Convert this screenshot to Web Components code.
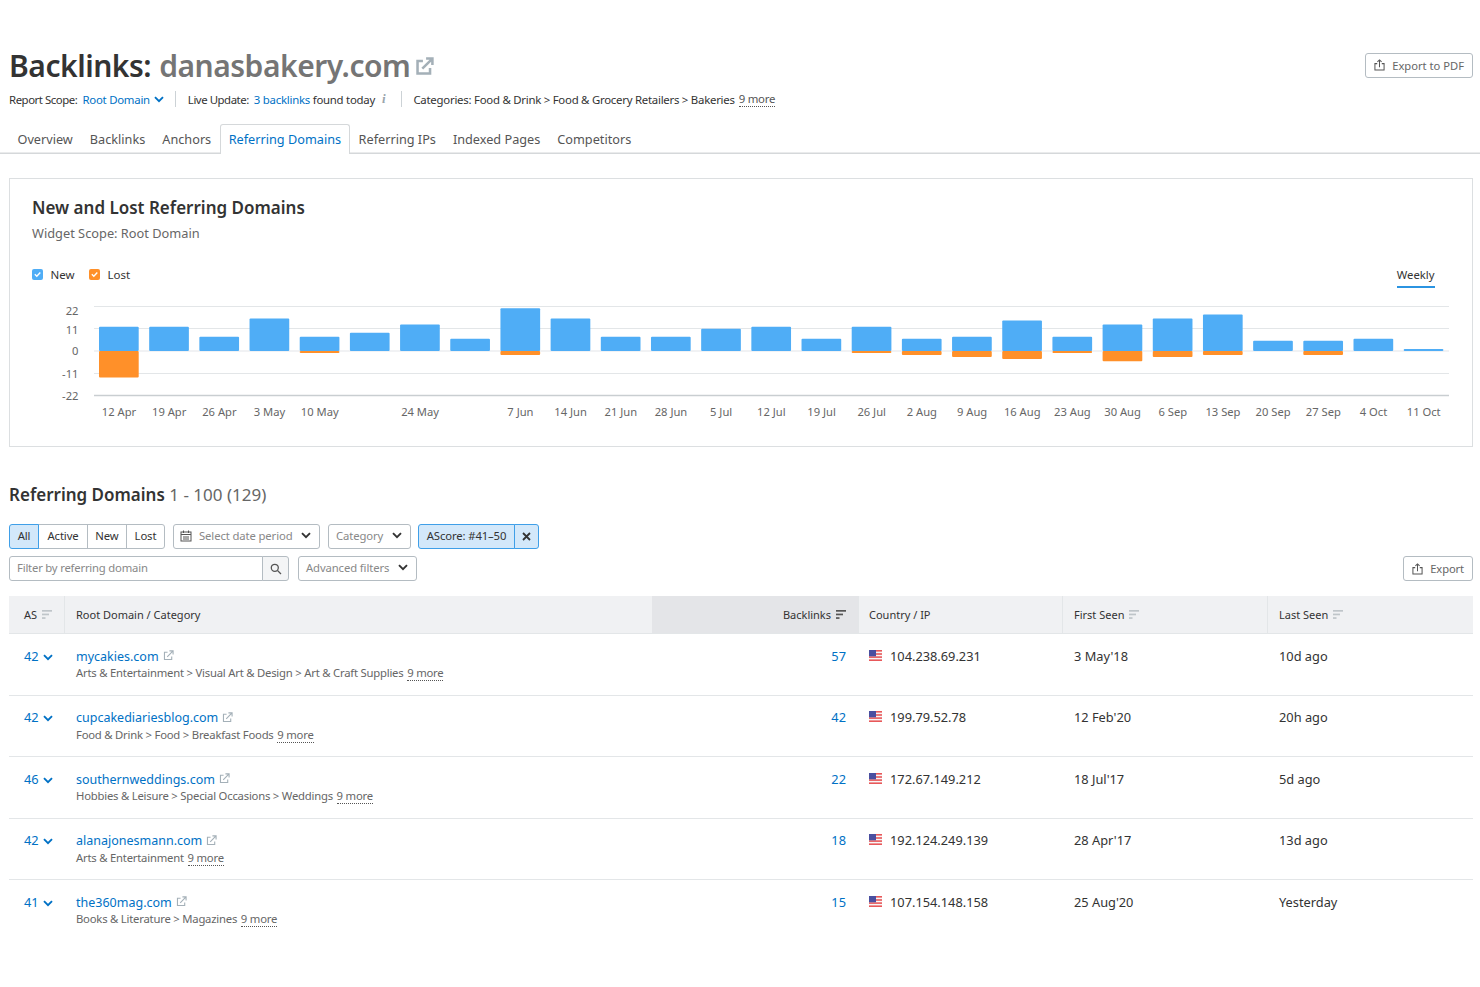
<!DOCTYPE html>
<html>
<head>
<meta charset="utf-8">
<title>Backlinks</title>
<style>
    html, body { margin: 0; background: #fff; }
    body { font-family: "Noto Sans", "Open Sans", sans-serif; color: #333; }
    report-page { width: 1480px; }
</style>
</head>
<body>
<report-page></report-page>

<script>
const ICONS = {
    ext: `<svg viewBox="0 0 12 12" width="100%" height="100%" fill="none" stroke="currentColor" stroke-width="1.2" style="display:block"><path d="M9.5 7v3.4H1.6V2.5H5"/><path d="M4.6 7.4 10.4 1.6M7 1h4v4" /></svg>`,
    chevron: `<svg viewBox="0 0 10 7" width="10" height="7" fill="none" stroke="currentColor" stroke-width="1.9"><path d="M1 1.2 5 5.2 9 1.2"/></svg>`,
    upload: `<svg viewBox="0 0 12 13" width="11" height="12" fill="none" stroke="currentColor" stroke-width="1.1"><path d="M3.5 5H1v7h10V5H8.500"/><path d="M6 9V1M3.700 3.200 6 1l2.300 2.200"/></svg>`,
    sort: `<svg viewBox="0 0 10 10" width="10" height="10" fill="currentColor"><rect width="10" height="1.700"/><rect y="3.600" width="7" height="1.700"/><rect y="7.200" width="3.500" height="1.700"/></svg>`,
    flag: `<svg viewBox="0 0 13 11" width="13" height="11"><rect width="13" height="11" fill="#f7f7f7"/><rect y="0" width="13" height="1.600" fill="#e8585a"/><rect y="3.200" width="13" height="1.600" fill="#e8585a"/><rect y="6.300" width="13" height="1.600" fill="#e8585a"/><rect y="9.400" width="13" height="1.600" fill="#e8585a"/><rect width="7" height="6.300" fill="#4a4fa0"/></svg>`
};

class SmallButton extends HTMLElement {
    connectedCallback() {
        this.attachShadow({ mode: 'open' });
        this.shadowRoot.innerHTML = `
            <style>
                :host { display: inline-flex; align-items: center; gap: 7px; height: 25px; box-sizing: border-box;
                    border: 1px solid #b4bcc2; border-radius: 3px; padding: 0 8px 0 8px; font-size: 11.200px; color: #666; background: #fff; white-space: nowrap; }
                svg { color: #555; display: block; }
            </style>
            ${ICONS.upload}<slot></slot>`;
    }
}

class ReportHeader extends HTMLElement {
    connectedCallback() {
        this.attachShadow({ mode: 'open' });
        this.shadowRoot.innerHTML = `
            <style>
                :host { display: block; padding: 45px 7px 0 9px; }
                .top { display: flex; justify-content: space-between; align-items: center; height: 40px; }
                h1 { margin: 0; padding-top: 2px; font-size: 30px; line-height: 38px; font-weight: 600; color: #333; display: flex; align-items: center; letter-spacing: -.47px; }
                h1 span { color: #757575; margin-left: 8px; }
                h1 i { display: block; width: 19px; height: 19px; margin-left: 5px; color: #a4b0b8; stroke-width: 1.6; }
                h1 i svg { stroke-width: 1.600; }
                .scope { display: flex; align-items: center; height: 20px; margin-top: 4px; font-size: 11.400px; letter-spacing: -.25px; color: #333; white-space: nowrap; }
                a { color: #0071c5; }
                .sep { width: 1px; height: 16px; background: #ccd2d6; margin: 0 11.500px; }
                .chev { color: #0071c5; margin-left: 4px; display: inline-flex; }
                .info { color: #9aa5ac; font: italic 700 13px "Liberation Serif", serif; margin-left: 7px; margin-right: 4px; }
                .more { border-bottom: 1px dotted #555; margin-left: 4px; line-height: 14px; color: #555; }
                .pre { margin-right: 5px; letter-spacing: -.45px; }
            </style>
            <div class="top">
                <h1>Backlinks: <span>danasbakery.com</span><i>${ICONS.ext}</i></h1>
                <small-button>Export to PDF</small-button>
            </div>
            <div class="scope">
                <span class="pre">Report Scope:</span><a>Root Domain</a><span class="chev">${ICONS.chevron}</span>
                <span class="sep"></span>
                <span class="pre">Live Update:</span><a>3 backlinks</a>&nbsp;found today<span class="info">i</span>
                <span class="sep"></span>
                <span>Categories: Food &amp; Drink &gt; Food &amp; Grocery Retailers &gt; Bakeries</span><span class="more">9 more</span>
            </div>`;
    }
}

class ReportTabs extends HTMLElement {
    connectedCallback() {
        const tabs = ['Overview', 'Backlinks', 'Anchors', 'Referring Domains', 'Referring IPs', 'Indexed Pages', 'Competitors'];
        this.attachShadow({ mode: 'open' });
        this.shadowRoot.innerHTML = `
            <style>
                :host { display: flex; height: 30px; margin-top: 15px; padding-left: 9px; box-shadow: inset 0 -1.500px 0 #d5d8da; font-size: 12.700px; color: #555; }
                div { display: flex; align-items: center; padding: 0 8.500px; white-space: nowrap; }
                div.active { color: #0071c5; border: 1px solid #d5d8da; border-bottom: 0; border-radius: 3px 3px 0 0; background: #fff; padding: 0 8px 1px; }
            </style>
            ${tabs.map(t => `<div class="${t === 'Referring Domains' ? 'active' : ''}">${t}</div>`).join('')}`;
    }
}

class BarChart extends HTMLElement {
    connectedCallback() {
        // label, new, lost
        const weeks = [
            ['12 Apr', 12, 13], ['19 Apr', 12, 0], ['26 Apr', 7, 0], ['3 May', 16, 0], ['10 May', 7, 1], ['', 9, 0],
            ['24 May', 13, 0], ['', 6, 0], ['7 Jun', 21, 2], ['14 Jun', 16, 0], ['21 Jun', 7, 0], ['28 Jun', 7, 0],
            ['5 Jul', 11, 0], ['12 Jul', 12, 0], ['19 Jul', 6, 0], ['26 Jul', 12, 1], ['2 Aug', 6, 2], ['9 Aug', 7, 3],
            ['16 Aug', 15, 4], ['23 Aug', 7, 1], ['30 Aug', 13, 5], ['6 Sep', 16, 3], ['13 Sep', 18, 2], ['20 Sep', 5, 0],
            ['27 Sep', 5, 2], ['4 Oct', 6, 0], ['11 Oct', 1, 0]
        ];
        const zero = 51, unit = 2.03, step = 50.18;
        // value, line y, label baseline
        const grid = [[22, 6.500, 15], [11, 28.500, 33.500], [0, 51, 55], [-11, 73.500, 77.500], [-22, 95.500, 99.500]];
        const bars = weeks.map(([label, plus, minus], i) => {
            const x = 99 + i * step;
            const top = plus * unit, bottom = minus * unit;
            return `
                <rect x="${x}" y="${zero - top}" width="39.700" height="${top}" fill="#4fadf6" rx="1"/>
                ${minus ? `<rect x="${x}" y="${zero}" width="39.700" height="${bottom}" fill="#ff9029" rx="1"/>` : ''}
                ${label ? `<text x="${x + 20}" y="116" text-anchor="middle">${label}</text>` : ''}`;
        }).join('');
        this.attachShadow({ mode: 'open' });
        this.shadowRoot.innerHTML = `
            <style>
                :host { display: block; margin: 0 -23px 0 -23px; height: 122px; }
                svg { display: block; }
                text { font-size: 11.200px; fill: #666; font-family: "Noto Sans", "Open Sans", sans-serif; }
            </style>
            <svg width="1460" height="122" viewBox="0 0 1460 122">
                ${grid.map(([v, y, base]) => `
                    <line x1="85" x2="1440" y1="${y}" y2="${y}" stroke="${v === -22 ? '#c9ced1' : v === 0 ? '#eceef0' : '#e3e6e8'}" stroke-width="${v === -22 ? 1.500 : v === 0 ? 1.500 : 1}"/>
                    <text x="69.500" y="${base}" text-anchor="end">${v}</text>`).join('')}
                <g transform="translate(-9 0)">${bars}</g>
            </svg>`;
    }
}

class ChartWidget extends HTMLElement {
    connectedCallback() {
        const check = c => `<svg width="11" height="11" viewBox="0 0 11 11"><rect width="11" height="11" rx="2" fill="${c}"/><path d="M2.800 5.300 4.800 7.200 8.300 3.600" fill="none" stroke="#fff" stroke-width="1.400"/></svg>`;
        this.attachShadow({ mode: 'open' });
        this.shadowRoot.innerHTML = `
            <style>
                :host { display: block; box-sizing: border-box; height: 269px; margin: 24px 7px 0 9px; border: 1.500px solid #dcdfe1; padding: 0 22px; }
                h2 { margin: 17px 0 0; font-size: 17px; line-height: 24px; font-weight: 600; color: #333; }
                p { margin: 3px 0 0; font-size: 12.800px; line-height: 20px; color: #666; }
                .legend { display: flex; align-items: center; height: 20px; margin-top: 21px; font-size: 11.500px; color: #333; }
                .legend svg { margin-right: 7.500px; }
                .legend span { margin-right: 14.500px; }
                .weekly { margin-left: auto; height: 24px; box-sizing: border-box; padding-top: 3px; margin-bottom: -4px; margin-right: 15.500px; font-size: 11.300px; border-bottom: 2.500px solid #2b94e1; }
                bar-chart { margin-top: 16px; }
            </style>
            <h2>New and Lost Referring Domains</h2>
            <p>Widget Scope: Root Domain</p>
            <div class="legend">
                ${check('#4fadf6')}<span>New</span>${check('#ff9029')}<span>Lost</span>
                <div class="weekly">Weekly</div>
            </div>
            <bar-chart></bar-chart>`;
    }
}

class FilterBar extends HTMLElement {
    connectedCallback() {
        this.attachShadow({ mode: 'open' });
        this.shadowRoot.innerHTML = `
            <style>
                :host { display: block; padding: 0 7px 0 9px; font-size: 11.300px; letter-spacing: -.12px; color: #333; }
                .row { display: flex; align-items: center; height: 25px; }
                .row + .row { margin-top: 7px; }
                .box { display: flex; align-items: center; height: 25px; box-sizing: border-box; border: 1px solid #b4bcc2; border-radius: 3px; white-space: nowrap; padding-bottom: 2px; }
                .seg { justify-content: center; border-radius: 0; margin-left: -1px; }
                .seg.first { margin-left: 0; border-radius: 3px 0 0 3px; }
                .seg.last { border-radius: 0 3px 3px 0; }
                .on { background: #d3e8fa; border-color: #3f9fe8; position: relative; }
                .select { color: #888; justify-content: space-between; padding: 0 8px 2px 7px; margin-left: 8px; }
                .select svg.chev { color: #333; }
                .cal { display: inline-flex; margin-right: 7px; color: #555; margin-left: -1px; }
                .input { width: 254px; color: #888; padding-left: 7px; border-radius: 3px 0 0 3px; letter-spacing: -.2px; }
                .search { width: 27px; margin-left: -1px; justify-content: center; background: #f4f5f6; border-radius: 0 3px 3px 0; color: #555; padding-bottom: 0; }
                small-button { margin-left: auto; }
            </style>
            <div class="row">
                <div class="box seg on first" style="width:30px;z-index:1">All</div>
                <div class="box seg" style="width:50px">Active</div>
                <div class="box seg" style="width:40px">New</div>
                <div class="box seg last" style="width:39px">Lost</div>
                <div class="box select" style="width:147px"><span style="display:flex;align-items:center"><span class="cal"><svg width="12" height="12" viewBox="0 0 12 12" fill="none" stroke="currentColor"><rect x="1" y="2" width="10" height="9"/><path d="M3.500 0.500v2.500M8.500 0.500v2.500M1 4.500h10M3 7h6M3 9h6"/></svg></span>Select date period</span><svg class="chev" viewBox="0 0 10 7" width="10" height="7" fill="none" stroke="currentColor" stroke-width="1.900"><path d="M1 1.200 5 5.200 9 1.200"/></svg></div>
                <div class="box select" style="width:83px">Category<svg class="chev" viewBox="0 0 10 7" width="10" height="7" fill="none" stroke="currentColor" stroke-width="1.900"><path d="M1 1.200 5 5.200 9 1.200"/></svg></div>
                <div class="box seg first on" style="width:97px;margin-left:7px">AScore: #41–50</div>
                <div class="box seg last on" style="width:25px;padding-bottom:0"><svg width="9" height="9" viewBox="0 0 9 9" stroke="#333" stroke-width="1.800"><path d="M1 1l7 7M8 1 1 8"/></svg></div>
            </div>
            <div class="row">
                <div class="box input">Filter by referring domain</div>
                <div class="box search"><svg width="12" height="12" viewBox="0 0 12 12" fill="none" stroke="currentColor" stroke-width="1.300"><circle cx="4.800" cy="4.800" r="3.500"/><path d="M7.500 7.500 11 11"/></svg></div>
                <div class="box select" style="width:119px;margin-left:9px">Advanced filters<svg class="chev" viewBox="0 0 10 7" width="10" height="7" fill="none" stroke="currentColor" stroke-width="1.900"><path d="M1 1.200 5 5.200 9 1.200"/></svg></div>
                <small-button>Export</small-button>
            </div>`;
    }
}

class DomainRow extends HTMLElement {
    connectedCallback() {
        const d = this.dataset;
        this.attachShadow({ mode: 'open' });
        this.shadowRoot.innerHTML = `
            <style>
                :host { display: grid; grid-template-columns: 55px 588px 206px 204px 205px 206px; height: 61.500px; box-sizing: border-box; border-bottom: 1px solid #e3e6e8; font-size: 12.800px; color: #333; }
                :host(:last-child) { border-bottom: 0; }
                .cell { padding-top: 11.500px; line-height: 20px; white-space: nowrap; }
                a { color: #0071c5; }
                .as { padding-left: 15px; display: flex; align-items: flex-start; gap: 4px; }
                .as span { display: flex; margin-top: 8px; color: #0071c5; }
                .dom { padding-left: 12px; }
                .dom a { font-size: 12.500px; }
                .dom i { display: inline-block; width: 11px; height: 11px; margin-left: 4px; color: #a4b0b8; vertical-align: -0.5px; }
                .cat { font-size: 11.300px; letter-spacing: -.22px; line-height: 15px; margin-top: -1.500px; color: #666; }
                .cat u { text-decoration: none; border-bottom: 1px dotted #555; margin-left: 1px; }
                .num { text-align: right; padding-right: 12px; }
                .ip { padding-left: 11px; display: flex; align-items: flex-start; gap: 8px; }
                .ip svg { margin-top: 4px; }
                .date { padding-left: 12px; }
            </style>
            <div class="cell as"><a>${d.as}</a><span>${ICONS.chevron}</span></div>
            <div class="cell dom"><a>${d.domain}</a><i>${ICONS.ext}</i>
                <div class="cat">${d.cat} <u>9 more</u></div></div>
            <div class="cell num"><a>${d.links}</a></div>
            <div class="cell ip">${ICONS.flag}<span>${d.ip}</span></div>
            <div class="cell date">${d.first}</div>
            <div class="cell date">${d.last}</div>`;
    }
}

class DomainsTable extends HTMLElement {
    connectedCallback() {
        this.attachShadow({ mode: 'open' });
        this.shadowRoot.innerHTML = `
            <style>
                :host { display: block; margin: 15px 7px 0 9px; }
                .head { display: grid; grid-template-columns: 55px 588px 206px 204px 205px 206px; height: 38px; background: #f0f1f3; border-bottom: 1px solid #e3e6e8; box-sizing: border-box; font-size: 11px; color: #333; }
                .head div { display: flex; align-items: center; gap: 5px; padding-left: 11px; border-left: 1px solid #e3e6e8; white-space: nowrap; }
                .head div:first-child { border-left: 0; padding-left: 15px; }
                .head svg { color: #bfc5c9; }
                .head .sorted { background: #e4e5e8; justify-content: flex-end; padding-right: 12px; border-left: 0; }
                .head .sorted svg { color: #555; }
            </style>
            <div class="head">
                <div>AS ${ICONS.sort}</div>
                <div>Root Domain / Category</div>
                <div class="sorted">Backlinks ${ICONS.sort}</div>
                <div style="padding-left:10px">Country / IP</div>
                <div>First Seen ${ICONS.sort}</div>
                <div>Last Seen ${ICONS.sort}</div>
            </div>
            <slot></slot>`;
    }
}

class ReportPage extends HTMLElement {
    connectedCallback() {
        this.attachShadow({ mode: 'open' });
        const rows = [
            ['42', 'mycakies.com', 'Arts &amp; Entertainment &gt; Visual Art &amp; Design &gt; Art &amp; Craft Supplies', '57', '104.238.69.231', "3 May'18", '10d ago'],
            ['42', 'cupcakediariesblog.com', 'Food &amp; Drink &gt; Food &gt; Breakfast Foods', '42', '199.79.52.78', "12 Feb'20", '20h ago'],
            ['46', 'southernweddings.com', 'Hobbies &amp; Leisure &gt; Special Occasions &gt; Weddings', '22', '172.67.149.212', "18 Jul'17", '5d ago'],
            ['42', 'alanajonesmann.com', 'Arts &amp; Entertainment', '18', '192.124.249.139', "28 Apr'17", '13d ago'],
            ['41', 'the360mag.com', 'Books &amp; Literature &gt; Magazines', '15', '107.154.148.158', "25 Aug'20", 'Yesterday']
        ];
        this.shadowRoot.innerHTML = `
            <style>
                :host { display: block; }
                h2 { margin: 38px 7px 19px 9px; font-size: 17px; line-height: 20px; font-weight: 600; color: #333; }
                h2 span { font-weight: 400; color: #666; }
            </style>
            <report-header></report-header>
            <report-tabs></report-tabs>
            <chart-widget></chart-widget>
            <h2>Referring Domains <span>1 - 100 (129)</span></h2>
            <filter-bar></filter-bar>
            <domains-table>
                ${rows.map(r => `<domain-row data-as="${r[0]}" data-domain="${r[1]}" data-cat="${r[2]}" data-links="${r[3]}" data-ip="${r[4]}" data-first="${r[5]}" data-last="${r[6]}"></domain-row>`).join('')}
            </domains-table>`;
    }
}

customElements.define('small-button', SmallButton);
customElements.define('report-header', ReportHeader);
customElements.define('report-tabs', ReportTabs);
customElements.define('bar-chart', BarChart);
customElements.define('chart-widget', ChartWidget);
customElements.define('filter-bar', FilterBar);
customElements.define('domain-row', DomainRow);
customElements.define('domains-table', DomainsTable);
customElements.define('report-page', ReportPage);
</script>
</body>
</html>
